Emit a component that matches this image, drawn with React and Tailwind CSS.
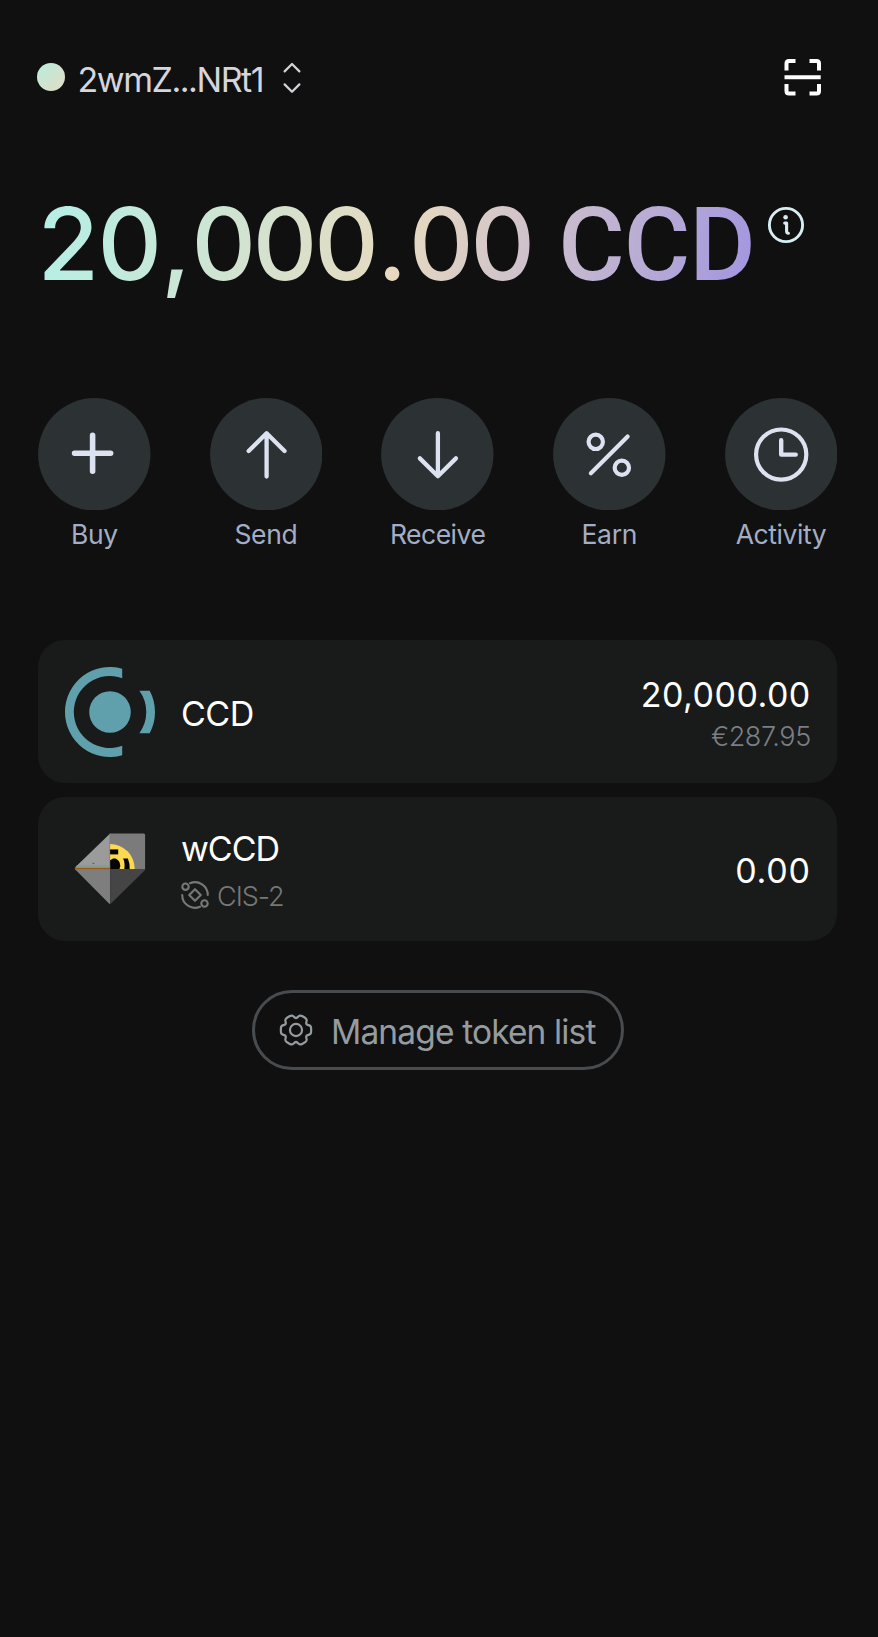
import React from "react";

const actions = [
  {
    label: "Buy",
    tracking: "tracking-[-0.4px]",
    icon: <path d="M36.7 55.4H72.9M54.8 37.3V73.5" strokeWidth="5.6" />,
  },
  {
    label: "Send",
    tracking: "tracking-[-0.3px]",
    icon: <path d="M56.8 35.5V78.9M38.8 53.2L56.8 35.3L74.8 53.2" strokeWidth="4.3" />,
  },
  {
    label: "Receive",
    tracking: "tracking-[-0.5px]",
    icon: <path d="M57.1 35.3V78.5M39 60.6L57.1 78.6L75.2 60.6" strokeWidth="4.3" />,
  },
  {
    label: "Earn",
    tracking: "tracking-[-0.3px]",
    icon: (
      <>
        <circle cx="42.9" cy="44" r="7.2" strokeWidth="4.2" />
        <circle cx="69.1" cy="70" r="7.2" strokeWidth="4.2" />
        <path d="M38 75.6L74.9 38.7" strokeWidth="4.2" />
      </>
    ),
  },
  {
    label: "Activity",
    tracking: "tracking-[-0.4px]",
    icon: (
      <>
        <circle cx="56.4" cy="56.8" r="25.2" strokeWidth="4.2" />
        <path d="M56.4 42.3V56.8H71" strokeWidth="4.4" />
      </>
    ),
  },
];

function gearPath(cx, cy) {
  const pts = [];
  for (let k = 0; k < 6; k++) {
    for (const [off, r] of [[-30, 12], [-15, 16.6], [15, 16.6]]) {
      const a = ((k * 60 + off) * Math.PI) / 180;
      pts.push([cx + r * Math.cos(a), cy + r * Math.sin(a)]);
    }
  }
  const lerp = (a, b, t) => [a[0] + (b[0] - a[0]) * t, a[1] + (b[1] - a[1]) * t];
  const f = (p) => p[0].toFixed(2) + " " + p[1].toFixed(2);
  let d = "";
  pts.forEach((p, i) => {
    const prev = pts[(i + pts.length - 1) % pts.length];
    const next = pts[(i + 1) % pts.length];
    d += (i === 0 ? "M" : "L") + f(lerp(p, prev, 0.35)) + "Q" + f(p) + " " + f(lerp(p, next, 0.35));
  });
  return d + "Z";
}

function ConcordiumMark() {
  return (
    <svg className="h-[92px] w-[92px] shrink-0" viewBox="-46 -46 92 92" fill="#5fa0ac">
      <circle r="20.8" />
      <path d="M12.2 -43.3A45 45 0 1 0 12.2 43.3V33.8A36 36 0 1 1 12.2 -33.8Z" />
      <path d="M29.4 -21.2H39.7A45 45 0 0 1 39.7 21.2H29.4A36.2 36.2 0 0 0 29.4 -21.2Z" />
    </svg>
  );
}

function WrappedMark() {
  return (
    <svg className="h-[92px] w-[92px] shrink-0" viewBox="63.5 823 92 92">
      <path d="M109.6 833.5L75 867Q74 868.5 75 870L109.6 869Z" fill="#9b9b9b" />
      <path d="M74.3 869L108.5 903.5L109.6 904V869Z" fill="#7e7e7e" />
      <path d="M109 833.5H143.5L144.6 834.6V869H109Z" fill="#7b7b7b" />
      <path d="M109.6 869H144.6V870L110.5 903.5L109.6 904Z" fill="#454545" />
      <path d="M109.6 844A24.5 24.8 0 0 1 134.2 869H109.6Z" fill="#fbd951" />
      <path d="M109.6 860.2L112.5 858.6H115Q119.6 860.5 119.8 866L119 869H109.6Z" fill="#050505" />
      <path d="M109.6 849.4H117.7V854.4H109.6Z" fill="#050505" />
      <path d="M122.6 858.6H127.4Q129.4 863.5 129.2 869H123.8Q124.8 863 122.6 858.6Z" fill="#050505" />
      <path d="M76 866.3H109.6" stroke="#7f9c96" strokeWidth="1.6" />
      <path d="M74.3 868.5H109.6" stroke="#a2590c" strokeWidth="1.6" />
      <path d="M92 863.4H94" stroke="#555" strokeWidth="0.9" />
    </svg>
  );
}

export default function App() {
  return (
    <div className="flex h-[1637px] w-[878px] flex-col bg-[#101010] pl-[38px] pr-[40.7px] font-['Inter',sans-serif]">
      <header className="mt-[48px] flex h-[56px] items-center">
        <span className="-ml-[1px] mt-[2px] h-[27.5px] w-[27.5px] rounded-full bg-linear-to-br from-[#b8ece0] to-[#e2dcc3]" />
        <span className="ml-[13px] mt-[7px] w-[192px] whitespace-nowrap text-[34px] leading-[40px] tracking-[-1.45px] text-[#d6d5dc]">
          2wmZ...NRt1
        </span>
        <svg className="ml-[12.5px] mt-px h-[34px] w-[20px]" viewBox="0 0 20 34" fill="none" stroke="#d3d3d8" strokeWidth="2.2" strokeLinecap="round" strokeLinejoin="round">
          <path d="M2.6 11.4L10 4L17.4 11.4M2.6 24.4L10 31.8L17.4 24.4" />
        </svg>
        <svg className="ml-auto mr-[16.6px] mt-px h-[38px] w-[37px]" viewBox="0 0 37 38" fill="none" stroke="#fff" strokeWidth="4">
          <path d="M11.5 3H5Q2.5 3 2.5 5.5V12.5M25.5 3H32.5Q35 3 35 5.5V12.5M2.5 26V33Q2.5 35.5 5 35.5H11.5M35 26V33Q35 35.5 32.5 35.5H25.5M.5 19.2H36.7" />
        </svg>
      </header>

      <div className="mt-[80px] flex h-[120px] items-start">
        <h1 className="-ml-[0.6px] w-[722px] whitespace-nowrap bg-linear-[105deg,#b3f0e8_0%,#e7dac0_50%,#a093e0_100%] bg-clip-text font-['Roboto',sans-serif] text-[102px] font-medium leading-[120px] text-transparent">
          <span className="font-['Inter',sans-serif] text-[100px] font-[550] tracking-[-3.2px]">
            <span className="tracking-[-1.5px]">2</span>0
            <span className="ml-[2px] tracking-[0.3px]">,</span>000
            <span className="ml-[1.4px] tracking-[1.8px]">.</span>00
          </span>
          <span className="ml-[2px] tracking-[-1px]"> CCD</span>
        </h1>
        <svg className="mt-[21.5px] ml-[7.2px] h-[38px] w-[38px]" viewBox="-19 -19 38 38" fill="none" stroke="#d6eef2" strokeWidth="2.9" strokeLinecap="round" strokeLinejoin="round">
          <circle r="16.6" />
          <path d="M-1.3 -1.9H0.6V6Q0.6 8.2 2.4 8.2" strokeWidth="3.1" />
          <circle cx="-0.4" cy="-7.8" r="2.3" fill="#d6eef2" stroke="none" />
        </svg>
      </div>

      <nav className="mt-[93.6px] flex justify-between">
        {actions.map((a) => (
          <div key={a.label} className="flex w-[112.6px] flex-col items-center">
            <svg className="h-[112.6px] w-[112.6px]" viewBox="0 0 113 113" fill="none" stroke="#dde2f1" strokeLinecap="round" strokeLinejoin="round">
              <circle cx="56.5" cy="56.5" r="56.4" fill="#2c3133" stroke="none" />
              {a.icon}
            </svg>
            <span className={`mt-[7.8px] text-[26.5px] leading-[32px] text-[#a2aec6] ${a.tracking}`}>{a.label}</span>
          </div>
        ))}
      </nav>

      <section className="mt-[90px] flex flex-col gap-[14px]">
        <article className="flex h-[143.4px] items-center rounded-[27px] bg-[#191b1a] pl-[26px] pr-[26.5px]">
          <ConcordiumMark />
          <span className="ml-[25px] mt-[4px] text-[34px] leading-[40px] tracking-[-0.5px] text-white">CCD</span>
          <div className="ml-auto mt-[8px] flex flex-col items-end">
            <span className="text-[34px] leading-[42px] tracking-[0.5px] text-white">20,000.00</span>
            <span className="text-[27px] leading-[41px] font-light tracking-[-0.4px] text-[#7b7e84]">€287.95</span>
          </div>
        </article>
        <article className="flex h-[143.4px] items-center rounded-[27px] bg-[#191b1a] pl-[26px] pr-[26.5px]">
          <WrappedMark />
          <div className="ml-[25px] mt-[6px] flex flex-col">
            <span className="text-[34px] leading-[48px] tracking-[-1px] text-white">wCCD</span>
            <span className="flex items-center gap-[8px] text-[27px] font-light leading-[47px] tracking-[-1px] text-[#777]">
              <svg className="-mt-[2px] h-[28px] w-[28px]" viewBox="-14 -14 28 28" fill="none" stroke="#777" strokeWidth="2.1" strokeLinecap="round">
                <path d="M-5 -11.8A12.8 12.8 0 0 1 12.8 0M-12.8 0A12.8 12.8 0 0 0 5 11.8" />
                <circle cx="-9.5" cy="-8.3" r="3.2" />
                <circle cx="9.5" cy="8.5" r="3.2" />
                <path d="M0 -5.8L5.8 0L0 5.8L-5.8 0Z" strokeLinejoin="round" />
              </svg>
              CIS-2
            </span>
          </div>
          <span className="ml-auto mt-[4px] text-[34px] leading-[40px] tracking-[0.8px] text-white">0.00</span>
        </article>
      </section>

      <button className="ml-[214px] mt-[49.5px] flex h-[80px] w-[372px] items-center rounded-full border-[3px] border-[#484c4f] pl-[24px] text-[#959ca0]">
        <svg className="h-[34px] w-[34px] shrink-0" viewBox="-18 -18 36 36" fill="none" stroke="currentColor" strokeWidth="2.3" strokeLinejoin="round">
          <path d={gearPath(0, 0)} />
          <circle r="6.4" />
        </svg>
        <span className="ml-[18px] mt-[4px] whitespace-nowrap text-[33.5px] leading-[40px] tracking-[-0.86px]">Manage token list</span>
      </button>
    </div>
  );
}
